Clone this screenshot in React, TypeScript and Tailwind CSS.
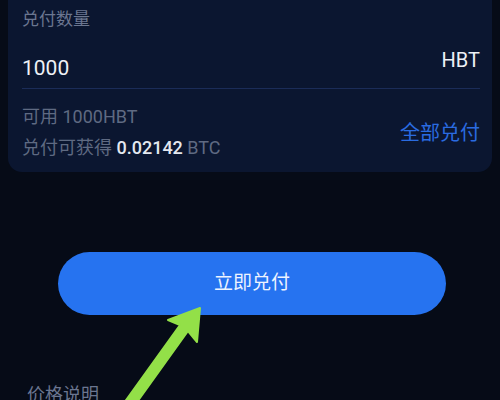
import React from "react";

export default function App() {
  return (
    <div
      className="relative w-[500px] h-[400px] overflow-hidden bg-[#060b17]"
      style={{ fontFamily: 'Roboto, "Noto Sans CJK SC", sans-serif' }}
    >
      <div className="mx-2 rounded-b-[14px] bg-[#0b1630] pl-[14px] pr-[12px]">
        <div className="h-[40px] flex items-center text-[17px] text-[#6b7690]">兑付数量</div>
        <div className="h-[49px] flex justify-between border-b border-[#1b2c58]">
          <div className="mt-[16px] leading-[24px] text-[21px] text-[#eef1f6]">1000</div>
          <div className="mt-[8px] leading-[24px] text-[20px] text-[#eef1f6]">HBT</div>
        </div>
        <div className="flex items-center justify-between pt-[16px] pb-[12px]">
          <div className="flex flex-col gap-[7px]">
            <div className="leading-[24px] text-[18px] text-[#5f6a82]">可用 1000HBT</div>
            <div className="leading-[24px] text-[18px] text-[#5f6a82]">
              兑付可获得 <span className="font-medium text-[#e4e8ef]">0.02142</span> BTC
            </div>
          </div>
          <div className="text-[20px] leading-[24px] text-[#2a6be0]">全部兑付</div>
        </div>
      </div>

      <div className="mt-[80px] pl-[58px] pr-[54px]">
        <div className="h-[63px] rounded-full bg-[#2673f0] flex items-center justify-center text-[19px] text-[#eef3ff]">
          立即兑付
        </div>
      </div>

      <div className="mt-[68px] pl-[27px] text-[18px] leading-[24px] text-[#6b7690]">价格说明</div>

      <svg className="absolute left-0 top-0" width="500" height="400" viewBox="0 0 500 400">
        <polygon
          points="200,308 197,342 188,331 132,409 124,403 180,325 168,320"
          fill="#93e048"
          stroke="#93e048"
          strokeWidth="2"
          strokeLinejoin="round"
        />
      </svg>
    </div>
  );
}
